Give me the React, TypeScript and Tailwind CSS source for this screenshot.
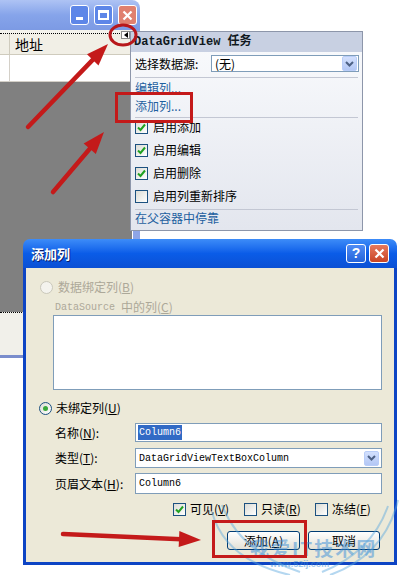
import React from "react";

const cjk = "font-['Noto_Sans_CJK_SC','Liberation_Sans',sans-serif]";
const mono = "font-['Liberation_Mono','Noto_Sans_CJK_SC',monospace]";

const Mn = ({ k }: { k: string }) => (
  <span>
    (<u>{k}</u>)
  </span>
);

const Check = ({ checked }: { checked?: boolean }) => (
  <span className="w-[13px] h-[13px] shrink-0 border border-[#1c5180] bg-gradient-to-br from-[#dcdcd5] to-white flex items-center justify-center">
    {checked && (
      <svg width="9" height="9" viewBox="0 0 9 9">
        <path d="M1 4.5 L3.5 7 L8 1.5" fill="none" stroke="#21a121" strokeWidth="2" />
      </svg>
    )}
  </span>
);

const Radio = ({ on, disabled }: { on?: boolean; disabled?: boolean }) => (
  <span
    className={`w-[13px] h-[13px] shrink-0 rounded-full border flex items-center justify-center ${
      disabled ? "border-[#cac8bb] bg-[#f4f3ee]" : "border-[#1c5180] bg-gradient-to-br from-[#dcdcd5] to-white"
    }`}
  >
    {on && <span className="w-[5px] h-[5px] rounded-full bg-[#3aa83a]" />}
  </span>
);

const DropBtn = () => (
  <span className="w-[15px] h-[15px] rounded-[2px] border border-[#b9cdf8] bg-gradient-to-b from-[#d3e0fd] to-[#b3c7f5] flex items-center justify-center">
    <svg width="9" height="6" viewBox="0 0 9 6">
      <path d="M1 1 L4.5 4.5 L8 1" fill="none" stroke="#4d6185" strokeWidth="2" />
    </svg>
  </span>
);

const arrow = (x1: number, y1: number, x2: number, y2: number) => {
  const dx = x2 - x1;
  const dy = y2 - y1;
  const len = Math.hypot(dx, dy);
  const ux = dx / len;
  const uy = dy / len;
  const hl = 22;
  const hw = 8;
  const bx = x2 - ux * hl;
  const by = y2 - uy * hl;
  const pts = `${x2},${y2} ${bx - uy * hw},${by + ux * hw} ${bx + uy * hw},${by - ux * hw}`;
  return (
    <g>
      <line x1={x1} y1={y1} x2={bx + ux * 2} y2={by + uy * 2} stroke="#c41a1a" strokeWidth="4.5" strokeLinecap="round" />
      <polygon points={pts} fill="#c41a1a" />
    </g>
  );
};

export default function App() {
  return (
    <div className={`relative w-[407px] h-[575px] bg-white overflow-hidden text-[12px] text-black ${cjk}`}>
      {/* background form window */}
      <div className="absolute left-0 top-0 w-[140px] h-[358px] flex flex-col">
        <div className="h-[30px] rounded-tr-[8px] bg-gradient-to-b from-[#aec3f4] via-[#86a4ea] to-[#7c9ae4] flex items-center justify-end gap-[5px] pr-[3px]">
          <span className="w-[19px] h-[20px] rounded-[3px] border border-white bg-[#5d86e8] flex items-end justify-center pb-[4px]">
            <span className="w-[7px] h-[3px] bg-white" />
          </span>
          <span className="w-[19px] h-[20px] rounded-[3px] border border-white bg-[#5d86e8] flex items-center justify-center">
            <span className="w-[11px] h-[10px] border-2 border-t-[3px] border-white" />
          </span>
          <span className="w-[19px] h-[20px] rounded-[3px] border border-white bg-[#e0806f] flex items-center justify-center">
            <svg width="11" height="11" viewBox="0 0 11 11">
              <path d="M1.5 1.5 L9.5 9.5 M9.5 1.5 L1.5 9.5" stroke="white" strokeWidth="2.2" />
            </svg>
          </span>
        </div>
        <div className="flex-1 flex">
          <div className="relative flex-1 flex flex-col bg-[#808080]">
            <div className="h-[4px] bg-[#f3f2ec] border-b border-dotted border-black" />
            <div className="h-[21px] bg-[#f1efe6] border-b border-[#cfcbbd] flex text-[14px]">
              <span className="w-[10px] border-r border-[#cfcbbd]" />
              <span className="pl-[5px] leading-[20px]">地址</span>
            </div>
            <div className="h-[27px] bg-white flex border-b border-[#d4d0c8]">
              <span className="w-[10px] border-r border-[#d4d0c8]" />
            </div>
            <div className="flex-1" />
            <div className="h-[43px] bg-[#f1f0ea] border-t border-dotted border-black" />
            <div className="h-[3px] bg-[#7a8dcc]" />
            <span className="absolute right-[2px] top-[1px] w-[9px] h-[8px] bg-white border border-[#8a8a8a] flex items-center justify-center">
              <svg width="4" height="6" viewBox="0 0 4 6">
                <path d="M4 0 L0 3 L4 6 Z" fill="black" />
              </svg>
            </span>
          </div>
          <div className="w-[8px] bg-[#8ea5e6] border-l border-white" />
        </div>
      </div>

      {/* smart tag panel */}
      <div className="absolute left-[130px] top-[31px] w-[233px] h-[200px] border border-[#8d96aa] bg-gradient-to-b from-[#fafbfd] to-[#e3e6ee] flex flex-col">
        <div className={`h-[20px] bg-[#c8d0e2] pl-[3px] flex items-center text-[12px] font-bold text-[#101820] ${mono}`}>
          DataGridView 任务
        </div>
        <div className="mt-[3px] h-[17px] flex items-center pl-[4px] pr-[3px]">
          <span className="w-[76px]">选择数据源:</span>
          <span className="flex-1 h-full bg-white border border-[#7f9db9] flex items-center justify-between pl-[3px] pr-[1px]">
            <span>(无)</span>
            <DropBtn />
          </span>
        </div>
        <div className="mt-[5px] h-px mx-[4px] bg-[#c3c7d3]" />
        <div className="mt-[2px] h-[16px] pl-[4px] leading-[16px] text-[#1e5f9f]">编辑列...</div>
        <div className="mt-[2px] h-[16px] pl-[4px] leading-[16px] text-[#1e5f9f]">添加列...</div>
        <div className="mt-[3px] h-px mx-[4px] bg-[#c3c7d3]" />
        {[
          ["启用添加", true],
          ["启用编辑", true],
          ["启用删除", true],
          ["启用列重新排序", false],
        ].map(([t, c], i) => (
          <div key={i} className={`${i === 0 ? "mt-[1px]" : "mt-[7px]"} h-[16px] flex items-center gap-[5px] pl-[4px]`}>
            <Check checked={c as boolean} />
            <span>{t as string}</span>
          </div>
        ))}
        <div className="mt-[5px] h-px mx-[4px] bg-[#c3c7d3]" />
        <div className="h-[16px] pl-[4px] leading-[16px] text-[#1e5f9f]">在父容器中停靠</div>
      </div>

      {/* add column dialog */}
      <div className="absolute left-[23px] top-[239px] w-[374px] h-[326px] flex flex-col">
        <div className="h-[29px] rounded-t-[7px] bg-gradient-to-b from-[#3d8cf8] via-[#0a5ce8] to-[#0b50d4] flex items-center justify-between pl-[8px] pr-[8px]">
          <span className="text-white font-bold text-[13px] [text-shadow:1px_1px_#0a1e6a]">添加列</span>
          <div className="flex gap-[3px]">
            <span className="w-[20px] h-[19px] rounded-[3px] border border-white bg-gradient-to-b from-[#4f8cf5] to-[#2463da] text-white font-bold text-[14px] flex items-center justify-center font-['Liberation_Sans',sans-serif]">
              ?
            </span>
            <span className="w-[20px] h-[19px] rounded-[3px] border border-white bg-gradient-to-b from-[#e7795d] to-[#c84424] flex items-center justify-center">
              <svg width="11" height="11" viewBox="0 0 11 11">
                <path d="M1.5 1.5 L9.5 9.5 M9.5 1.5 L1.5 9.5" stroke="white" strokeWidth="2.2" />
              </svg>
            </span>
          </div>
        </div>
        <div className="flex-1 border-x-[3px] border-b-[3px] border-[#0d44c4] bg-[#ece9d8] flex flex-col">
          <div className="mt-[11px] h-[16px] flex items-center gap-[5px] pl-[14px] text-[#aca899]">
            <Radio disabled />
            <span>
              数据绑定列<Mn k="B" />
            </span>
          </div>
          <div className="mt-[4px] h-[16px] flex items-center pl-[29px] text-[#aca899]">
            <span className={`${mono} text-[10px]`}>DataSource</span>
            <span className="ml-[6px]">
              中的列<Mn k="C" />
            </span>
          </div>
          <div className="ml-[27px] w-[329px] h-[75px] bg-white border border-[#7f9db9]" />
          <div className="mt-[10px] h-[16px] flex items-center gap-[4px] pl-[13px]">
            <Radio on />
            <span>
              未绑定列<Mn k="U" />
            </span>
          </div>
          <div className="mt-[7px] h-[19px] flex items-center pl-[29px]">
            <span className="w-[80px]">
              名称<Mn k="N" />:
            </span>
            <span className="w-[247px] h-full bg-white border border-[#7f9db9] flex items-center pl-[2px]">
              <span className={`${mono} text-[10px] bg-[#316ac5] text-white px-[1px]`}>Column6</span>
            </span>
          </div>
          <div className="mt-[6px] h-[20px] flex items-center pl-[29px]">
            <span className="w-[80px]">
              类型<Mn k="T" />:
            </span>
            <span className="w-[247px] h-full bg-white border border-[#7f9db9] flex items-center justify-between pl-[3px] pr-[2px]">
              <span className={`${mono} text-[10px]`}>DataGridViewTextBoxColumn</span>
              <DropBtn />
            </span>
          </div>
          <div className="mt-[5px] h-[21px] flex items-center pl-[29px]">
            <span className="w-[80px]">
              页眉文本<Mn k="H" />:
            </span>
            <span className="w-[247px] h-full bg-white border border-[#7f9db9] flex items-center pl-[3px]">
              <span className={`${mono} text-[10px]`}>Column6</span>
            </span>
          </div>
          <div className="mt-[8px] h-[14px] flex items-center pl-[147px]">
            {[
              ["可见", "V", true],
              ["只读", "R", false],
              ["冻结", "F", false],
            ].map(([t, k, c], i) => (
              <div key={i} className="w-[71px] flex items-center gap-[4px]">
                <Check checked={c as boolean} />
                <span>
                  {t as string}
                  <Mn k={k as string} />
                </span>
              </div>
            ))}
          </div>
          <div className="mt-[15px] h-[19px] flex gap-[8px] pl-[201px]">
            <span className="w-[73px] h-full rounded-[3px] border border-[#003c74] bg-gradient-to-b from-white to-[#e3e1d6] flex items-center justify-center">
              添加<Mn k="A" />
            </span>
            <span className="w-[72px] h-full rounded-[3px] border border-[#003c74] bg-gradient-to-b from-white to-[#e3e1d6] flex items-center justify-center">
              取消
            </span>
          </div>
        </div>
      </div>

      {/* watermark */}
      <div className="absolute left-[250px] top-[538px] text-[19px] leading-[20px] font-bold text-[#3d8fd8] opacity-50 tracking-[2px]">
        我爱IT技术网
      </div>
      <div className="absolute left-[270px] top-[559px] text-[9px] leading-[10px] font-bold text-[#3d8fd8] opacity-50 font-['Liberation_Sans',sans-serif]">
        www.52ij.com
      </div>

      {/* annotations */}
      <svg className="absolute left-0 top-0 pointer-events-none" width="407" height="575" viewBox="0 0 407 575">
        <g opacity="0.45" fill="none" stroke="#5aa8e0" strokeWidth="2">
          <path d="M212 512 Q225 560 290 575" />
          <path d="M222 505 Q240 552 300 572" />
          <path d="M398 500 Q385 555 330 575" />
          <path d="M388 506 Q372 552 322 572" />
        </g>
        <ellipse cx="123" cy="35" rx="13" ry="10" fill="none" stroke="#b8181b" strokeWidth="3" />
        <rect x="116.5" y="93.5" width="75" height="28" fill="none" stroke="#c41a1a" strokeWidth="3" />
        <rect x="213.5" y="521.5" width="92" height="35" fill="none" stroke="#c41a1a" strokeWidth="3" />
        {arrow(28, 127, 108, 44)}
        {arrow(53, 192, 104, 132)}
        {arrow(63, 534, 201, 540)}
      </svg>
    </div>
  );
}
